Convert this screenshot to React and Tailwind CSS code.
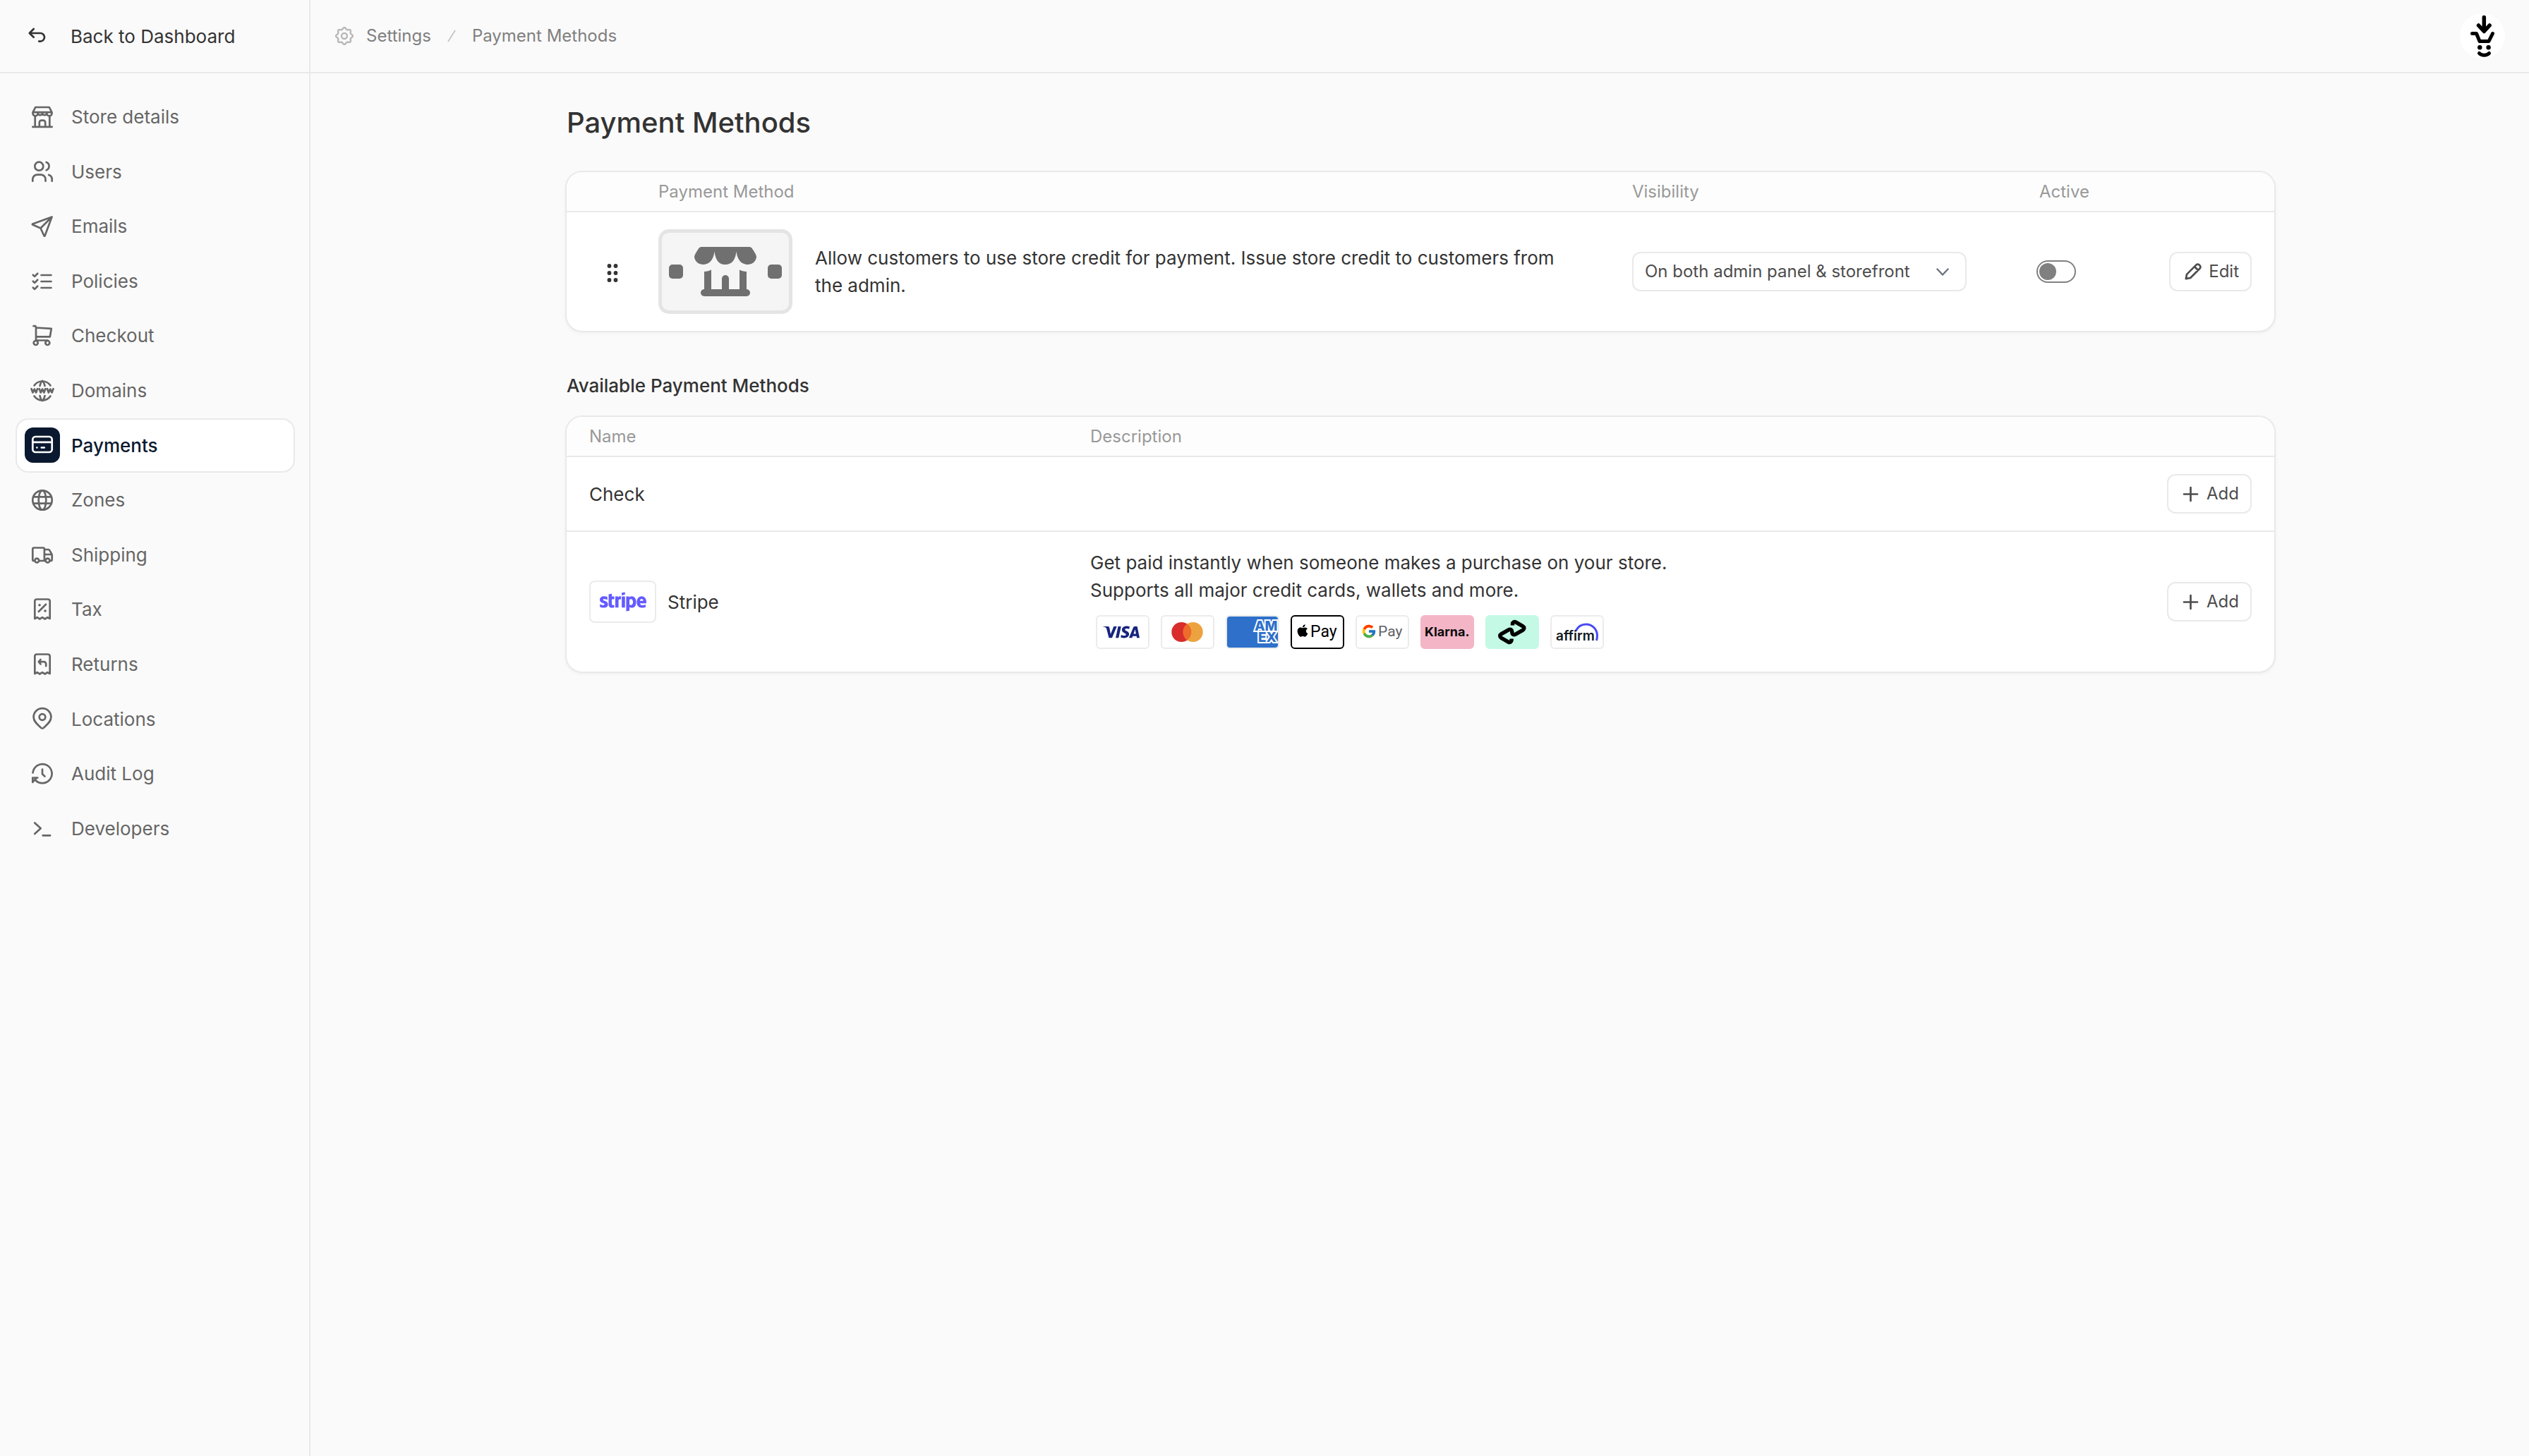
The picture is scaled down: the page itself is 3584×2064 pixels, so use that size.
import { FaStripe, FaApple } from "react-icons/fa";
import { SiVisa } from "react-icons/si";
import { FcGoogle } from "react-icons/fc";

function Icon({ children, className = "" }) {
  return (
    <svg
      viewBox="0 0 36 36"
      className={`size-9 shrink-0 ${className}`}
      fill="none"
      stroke="currentColor"
      strokeWidth="2.7"
      strokeLinecap="round"
      strokeLinejoin="round"
      aria-hidden="true"
    >
      {children}
    </svg>
  );
}

const receipt = "M7.3 31V6.3A2.8 2.8 0 0 1 10.1 3.5h15.8a2.8 2.8 0 0 1 2.8 2.8V31l-3.4-1.8-3.6 2.3-3.7-2.3-3.7 2.3-3.6-2.3z";

const navItems = [
  {
    label: "Store details",
    icon: (
      <>
        <path d="M8.2 4h19.6l3.6 7.2H4.6z M4.5 11.2v1.6a3.6 3.6 0 0 0 7.2 0v-1.6m0 1.6a3.3 3.3 0 0 0 6.3 0v-1.6m0 1.6a3.3 3.3 0 0 0 6.3 0v-1.6m0 1.6a3.6 3.6 0 0 0 7.2 0v-1.6" />
        <path d="M7.7 16.5v15.3M28.3 16.5v15.3M4.3 31.8h27.4M13.8 31.6v-6a3 3 0 0 1 3-3h2.4a3 3 0 0 1 3 3v6" />
      </>
    ),
  },
  {
    label: "Users",
    icon: (
      <>
        <circle cx="13.3" cy="10.7" r="6" />
        <path d="M4.3 31.7v-2.6a6.5 6.5 0 0 1 6.5-6.5h5.2a6.5 6.5 0 0 1 6.5 6.5v2.6M23.7 5a6 6 0 0 1 0 11.2M27.2 23a6.5 6.5 0 0 1 4.5 6.1v2.6" />
      </>
    ),
  },
  { label: "Emails", icon: <path d="M31.6 4.4 4.2 14.4a.6.6 0 0 0 0 1.1l11.3 5 5 10.8a.6.6 0 0 0 1.1 0zM15.5 20.5 31 5" /> },
  {
    label: "Policies",
    icon: <path d="M16.5 9h14M16.5 18h14M16.5 27h14M4.8 8.7l2.4 2.2 4-4.2M4.8 17.7l2.4 2.2 4-4.2M4.8 26.7l2.4 2.2 4-4.2" />,
  },
  {
    label: "Checkout",
    icon: (
      <>
        <path d="M5.5 4.2H7A2 2 0 0 1 9 6.2v18.5M9 6.5l21.8 1.3-2 11.6H9M9 24.5h16.5" />
        <circle cx="8.7" cy="28" r="3" />
        <circle cx="25.3" cy="28" r="3" />
      </>
    ),
  },
  {
    label: "Domains",
    icon: (
      <>
        <path d="M6.5 10.5a14 14 0 0 1 23 0M6.5 25.5a14 14 0 0 0 23 0" />
        <path d="M14.5 11c.7-3.2 2-6 3.5-7M21.5 11c-.7-3.2-2-6-3.5-7M14.5 25c.7 3.2 2 6 3.5 7M21.5 25c-.7 3.2-2 6-3.5 7" />
        <path
          d="M2.5 15.2l2 5.2 2.3-4.8 2.3 4.8 2-5.2M13.7 15.2l2 5.2 2.3-4.8 2.3 4.8 2-5.2M24.9 15.2l2 5.2 2.3-4.8 2.3 4.8 2-5.2"
          strokeWidth="2.8"
        />
      </>
    ),
  },
  {
    label: "Payments",
    active: true,
    icon: (
      <>
        <rect x="4.3" y="6" width="27.4" height="22" rx="4" />
        <path d="M4.5 13.8h27" />
        <path d="M10.3 21.5h.1M16.8 21.5h4" />
      </>
    ),
  },
  {
    label: "Zones",
    icon: (
      <>
        <circle cx="18" cy="18" r="13.7" />
        <path d="M5.2 13.4h25.6M5.2 22.6h25.6" />
        <ellipse cx="18" cy="18" rx="5.3" ry="13.7" />
      </>
    ),
  },
  {
    label: "Shipping",
    icon: (
      <>
        <path d="M5.5 26.2A1.5 1.5 0 0 1 4.3 25V9.3A1.8 1.8 0 0 1 6.1 7.5h13a1.8 1.8 0 0 1 1.8 1.8v16M13.5 26h8M20.9 10h5.6a2 2 0 0 1 1.8 1.1l3.1 5.5.3 1.4v6a2 2 0 0 1-2 2M21 17h10.3" />
        <circle cx="10.3" cy="25.5" r="2.9" />
        <circle cx="25.5" cy="25.5" r="2.9" />
      </>
    ),
  },
  {
    label: "Tax",
    icon: (
      <>
        <path d={receipt} />
        <path d="M12.8 21 23 10.8" />
        <path d="M14 11.8h.1M22 20h.1" strokeWidth="3.6" />
      </>
    ),
  },
  {
    label: "Returns",
    icon: (
      <>
        <path d={receipt} />
        <path d="M15.5 11 12.8 14.2l2.7 3.2M13.2 14.2h7a3 3 0 0 1 3 3v3" />
      </>
    ),
  },
  {
    label: "Locations",
    icon: (
      <>
        <path d="M18 31.5c-.8 0-1.5-.4-2-.9C11.5 26.2 5.6 22 5.6 15.5a12.4 12.4 0 0 1 24.8 0c0 6.5-5.9 10.7-10.4 15.1-.5.5-1.2.9-2 .9z" />
        <circle cx="18" cy="15.5" r="4.3" />
      </>
    ),
  },
  {
    label: "Audit Log",
    icon: <path d="M4.6 16.5A13.5 13.5 0 1 1 8.5 27.2M4.3 30v-6.5h7M4.8 29l4.5-4.5M18 11.5v6.8l3.4 3.2" />,
  },
  { label: "Developers", icon: <path d="M7.2 9.5l8.5 7.8-8.5 7.8M18.7 27.3h10.5" /> },
];

const gearPoints = Array.from({ length: 96 }, (_, i) => {
  const t = (i / 96) * 2 * Math.PI;
  const r = 10.7 + 1.2 * Math.cos(8 * t);
  return `${(14 + r * Math.sin(t)).toFixed(2)},${(14 - r * Math.cos(t)).toFixed(2)}`;
}).join(" ");

function Badge({ label, bg = "#ffffff", border = "#ebebeb", children }) {
  return (
    <svg viewBox="0 0 76 48" className="h-12 w-[76px]" role="img" aria-label={label}>
      <rect x="1" y="1" width="74" height="46" rx="5" fill={bg} stroke={border} strokeWidth="2" />
      {children}
    </svg>
  );
}

function PaymentBadges() {
  return (
    <div className="flex flex-wrap gap-4 px-2 pt-4 pb-2">
      <Badge label="Visa">
        <SiVisa x="10" y="-2" size="52" color="#17247f" />
      </Badge>
      <Badge label="Mastercard">
        <circle cx="29.3" cy="24" r="14" fill="#d82d2b" />
        <circle cx="45.7" cy="24" r="14" fill="#eca33f" />
        <path d="M37.5 12.6a14 14 0 0 1 0 22.8 14 14 0 0 1 0-22.8z" fill="#ef6b2c" />
      </Badge>
      <Badge label="American Express">
        <clipPath id="amexClip">
          <rect x="2" y="2" width="72" height="44" rx="4" />
        </clipPath>
        <g clipPath="url(#amexClip)">
          <rect x="2" y="2" width="72" height="44" fill="#2e70ca" />
          <g
            fill="#2e70ca"
            stroke="#ffffff"
            strokeWidth="4"
            paintOrder="stroke"
            fontSize="19"
            className="font-['Inter',sans-serif] font-extrabold"
          >
            <text x="41" y="22">AM</text>
            <text x="46" y="38">EX</text>
          </g>
        </g>
      </Badge>
      <Badge label="Apple Pay" border="#000000">
        <FaApple x="7" y="12" size="20" color="#000000" />
        <text x="28" y="31" fontSize="23" fill="#000000" className="font-['Roboto',sans-serif]">Pay</text>
      </Badge>
      <Badge label="Google Pay">
        <FcGoogle x="8" y="12" size="22" />
        <text x="32" y="30" fontSize="21" fill="#5f6368" className="font-['Roboto',sans-serif]">Pay</text>
      </Badge>
      <Badge label="Klarna" bg="#f4b6c7" border="#f4b6c7">
        <text x="6" y="30" fontSize="18" fill="#0b0b0b" className="font-['Inter',sans-serif] font-bold">Klarna.</text>
      </Badge>
      <Badge label="Afterpay" bg="#c4f9e6" border="#c4f9e6">
        <path
          d="M38.5 14.5v-2a3 3 0 0 1 4.5-2.6l10.3 6a3 3 0 0 1 0 5.2l-11 6.3a3 3 0 0 1-4.5-2.6v-1.6a3 3 0 0 0-4.5-2.6l-11 6.3a3 3 0 0 0 0 5.2l10.3 6a3 3 0 0 0 4.5-2.6v-2"
          fill="none"
          stroke="#000000"
          strokeWidth="5.5"
        />
      </Badge>
      <Badge label="Affirm">
        <path d="M36 22.5C39 16.5 44 13 50.5 13 60 13 66.5 20.5 66.5 29c0 2.5-.3 4.5-1 7" fill="none" stroke="#4a4af4" strokeWidth="3" />
        <text x="8" y="36" fontSize="19" fill="#101820" className="font-['Inter',sans-serif] font-semibold">affirm</text>
      </Badge>
    </div>
  );
}

function StoreCreditLogo() {
  return (
    <svg viewBox="0 0 190 120" className="h-[120px] w-[190px] shrink-0" role="img" aria-label="Store credit">
      <rect x="2.5" y="2.5" width="185" height="115" rx="12.5" fill="#f5f5f5" stroke="#e4e4e4" strokeWidth="5" />
      <g fill="#707070">
        <path d="M61 25h68c2 0 3 1 4 2.5 4 6 6 9 6 12.5a12 12 0 0 1-12 10c-9 0-15-6-16.5-18.5C109 44 104 50 95 50S81 44 79.5 31.5C78 44 72 50 63 50a12 12 0 0 1-12-10c0-3.5 2-6.500 6-12.5 1-1.5 2-2.5 4-2.5z" />
        <path d="M65 60c4 0 7-1 10-2.5V85h15V70a5 5 0 0 1 10 0v15h15V57.5c3 1.5 6 2.5 10 2.5v25a5 5 0 0 1 0 10H65a5 5 0 0 1 0-10z" />
        <rect x="15" y="50" width="20" height="20" rx="5" />
        <rect x="155" y="50" width="20" height="20" rx="5" />
      </g>
    </svg>
  );
}

const smallButton =
  "inline-flex h-14 items-center gap-1 rounded-xl border-2 border-[#e9e9e9] bg-white pr-4 pl-[14px] text-2xl text-[#4d4d4d]";

function AddButton() {
  return (
    <button type="button" className={smallButton}>
      <Icon>
        <path d="M8 18.5h19M17.500 9v19" />
      </Icon>
      Add
    </button>
  );
}

const card = "overflow-hidden rounded-3xl border-2 border-[#e9e9e9] bg-white shadow-[0_2px_4px_rgba(0,0,0,0.04)]";
const th = "h-[57px] border-b-2 border-[#e9e9e9] bg-[#fdfdfd] p-0 text-left text-2xl font-normal text-[#999999]";

export default function App() {
  return (
    <div className="flex min-h-screen bg-[#fafafa] font-['Inter',sans-serif] text-[26px] text-[#333333]">
      <aside className="flex w-[440px] shrink-0 flex-col border-r-2 border-[#e9e9e9]">
        <div className="h-[104px] border-b-2 border-[#e9e9e9]">
          <a href="#dashboard" className="flex h-[102px] items-center gap-[30px] pl-[34px]">
            <Icon>
              <path d="M13.7 8 7.8 14l5.9 5.7M8.5 14h14.7a5.8 5.8 0 0 1 0 11.6h-2" />
            </Icon>
            Back to Dashboard
          </a>
        </div>
        <nav className="pt-[25px] pr-[22px] pl-6">
          <ul className="flex flex-col gap-1">
            {navItems.map((item) => (
              <li key={item.label}>
                <a
                  href="#section"
                  aria-current={item.active ? "page" : undefined}
                  className={`flex items-center gap-4 rounded-2xl py-4 pr-3 pl-[11px] leading-[1.6] ${
                    item.active
                      ? "bg-white font-medium text-[#0a192f] ring-2 ring-[#e9e9e9]"
                      : "text-[#666666]"
                  }`}
                >
                  <span
                    className={`-my-2 flex size-[50px] items-center justify-center rounded-xl ${
                      item.active ? "bg-[#0a192f] text-white" : ""
                    }`}
                  >
                    <Icon>{item.icon}</Icon>
                  </span>
                  {item.label}
                </a>
              </li>
            ))}
          </ul>
        </nav>
      </aside>

      <div className="flex min-w-0 flex-1 flex-col">
        <header className="flex h-[104px] shrink-0 items-center justify-between border-b-2 border-[#e9e9e9] px-[34px]">
          <nav aria-label="Breadcrumb" className="flex items-center text-2xl text-[#808080]">
            <svg viewBox="0 0 28 28" className="size-7" fill="none" stroke="#b8b8b8" strokeWidth="2.4" aria-hidden="true">
              <polygon points={gearPoints} strokeLinejoin="round" />
              <circle cx="14" cy="14" r="4" />
            </svg>
            <a href="#settings" className="ml-[17px]">Settings</a>
            <svg viewBox="0 0 12 18" className="mx-[23px] h-[18px] w-3" fill="none" stroke="#c4c4c4" strokeWidth="1.8" aria-hidden="true">
              <path d="M1 17 11 1" />
            </svg>
            <a href="#payment-methods">Payment Methods</a>
          </nav>
          <button type="button" aria-label="Account" className="rounded-full bg-white">
            <svg viewBox="0 0 64 64" className="size-16" fill="none" stroke="#000000" strokeWidth="5.5" strokeLinecap="round" strokeLinejoin="round" aria-hidden="true">
              <path d="M34.3 5.5V25M26.5 17l7.8 8.5 7.8-8.5" />
              <path d="M17.5 28.500h6l4.5 11h13l5.5-11" strokeWidth="5" />
              <path d="M27.5 56.500c3.5 3.500 10.500 3.500 14 0" strokeWidth="5" />
              <circle cx="28.3" cy="48.3" r="3.2" fill="#000000" stroke="none" />
              <circle cx="40.6" cy="48.3" r="3.2" fill="#000000" stroke="none" />
            </svg>
          </button>
        </header>

        <main className="mx-auto w-full max-w-[2426px] pt-10 pl-[2px]">
          <h1 className="pl-[2px] text-[40px] leading-[60px] font-medium">Payment Methods</h1>

          <section className={`mt-[38px] ${card}`}>
            <table className="w-full table-fixed border-separate border-spacing-0">
              <colgroup>
                <col className="w-[130px]" />
                <col />
                <col className="w-[573px]" />
                <col className="w-[100px]" />
                <col className="w-[237px]" />
              </colgroup>
              <thead>
                <tr>
                  <th className={th} aria-label="Order" />
                  <th className={th}>Payment Method</th>
                  <th className={th}>Visibility</th>
                  <th className={th}><span className="pl-1">Active</span></th>
                  <th className={th} aria-label="Actions" />
                </tr>
              </thead>
              <tbody>
                <tr>
                  <td className="pl-[57px]">
                    <button type="button" aria-label="Reorder" className="flex pt-1">
                      <svg viewBox="0 0 16 28" className="h-7 w-4" fill="#333333" aria-hidden="true">
                        {[4, 14, 24].map((y) => (
                          <g key={y}>
                            <circle cx="3.5" cy={y} r="2.9" />
                            <circle cx="12.5" cy={y} r="2.9" />
                          </g>
                        ))}
                      </svg>
                    </button>
                  </td>
                  <td className="py-6 pr-20">
                    <div className="flex items-center gap-8">
                      <StoreCreditLogo />
                      <p className="leading-[39px]">
                        Allow customers to use store credit for payment. Issue store credit to customers from the admin.
                      </p>
                    </div>
                  </td>
                  <td>
                    <div className="relative w-[474px]">
                      <select
                        aria-label="Visibility"
                        className="h-14 w-full appearance-none rounded-xl border-2 border-[#e9e9e9] bg-white pl-4 text-2xl text-[#4d4d4d]"
                        defaultValue="both"
                      >
                        <option value="both">On both admin panel &amp; storefront</option>
                        <option value="admin">On admin panel only</option>
                        <option value="storefront">On storefront only</option>
                      </select>
                      <svg viewBox="0 0 18 12" className="pointer-events-none absolute top-[23px] right-[25px] h-3 w-[18px]" fill="none" stroke="#6b7280" strokeWidth="2.4" strokeLinecap="round" strokeLinejoin="round" aria-hidden="true">
                        <path d="M1.5 1.5 9 9.5l7.5-8" />
                      </svg>
                    </div>
                  </td>
                  <td>
                    <label className="flex h-8 w-14 items-center rounded-2xl border-2 border-[#808080] bg-white px-[2px]">
                      <input type="checkbox" role="switch" aria-label="Active" className="size-6 appearance-none rounded-full bg-[#808080]" />
                    </label>
                  </td>
                  <td className="pr-8">
                    <div className="flex justify-end">
                      <button type="button" className={smallButton}>
                        <Icon>
                          <path d="M7.8 28.2l1.2-6.3L22.5 8.4a2.8 2.8 0 0 1 4 0l1.1 1.1a2.8 2.8 0 0 1 0 4L14.1 27z M20 11l5 5" />
                        </Icon>
                        Edit
                      </button>
                    </div>
                  </td>
                </tr>
              </tbody>
            </table>
          </section>

          <h2 className="mt-14 pl-[2px] leading-[40px] font-medium">Available Payment Methods</h2>

          <section className={`mt-[22px] ${card}`}>
            <table className="w-full table-fixed border-separate border-spacing-0">
              <colgroup>
                <col className="w-[742px]" />
                <col />
                <col className="w-[200px]" />
              </colgroup>
              <thead>
                <tr>
                  <th className={`${th} pl-8!`}>Name</th>
                  <th className={th}>Description</th>
                  <th className={th} aria-label="Actions" />
                </tr>
              </thead>
              <tbody>
                <tr>
                  <td className="border-b-2 border-[#e9e9e9] py-6 pl-8">Check</td>
                  <td className="border-b-2 border-[#e9e9e9]" />
                  <td className="border-b-2 border-[#e9e9e9] py-6 pr-8">
                    <div className="flex justify-end">
                      <AddButton />
                    </div>
                  </td>
                </tr>
                <tr>
                  <td className="py-6 pl-8">
                    <div className="flex items-center gap-4">
                      <span className="flex h-[60px] w-[95px] items-center justify-center rounded-lg border-2 border-[#ebebeb]">
                        <FaStripe className="size-[66px] text-[#635bff]" aria-hidden="true" />
                      </span>
                      Stripe
                    </div>
                  </td>
                  <td className="py-6">
                    <p className="leading-[39px]">
                      Get paid instantly when someone makes a purchase on your store.
                      <br />
                      Supports all major credit cards, wallets and more.
                    </p>
                    <PaymentBadges />
                  </td>
                  <td className="py-6 pr-8">
                    <div className="flex justify-end">
                      <AddButton />
                    </div>
                  </td>
                </tr>
              </tbody>
            </table>
          </section>
        </main>
      </div>
    </div>
  );
}
